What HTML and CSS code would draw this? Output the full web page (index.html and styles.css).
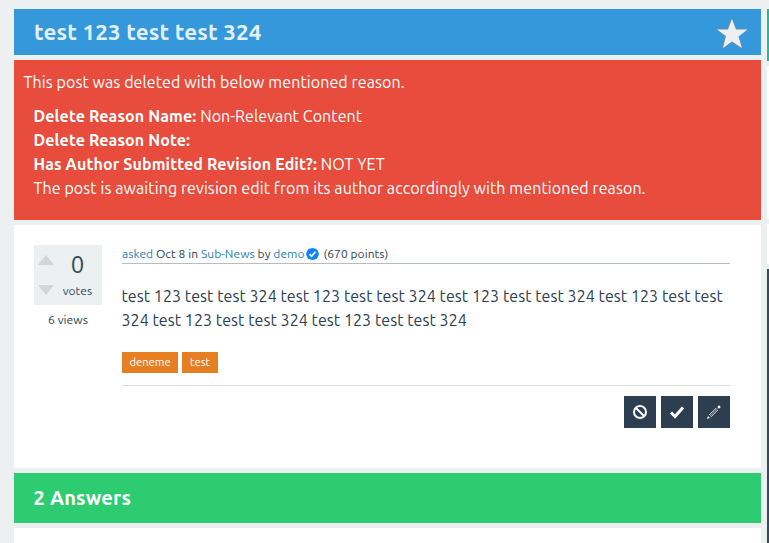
FILE: index.html
```html
<!DOCTYPE html>
<html lang="en">
<head>
<meta charset="utf-8">
<title>test 123 test test 324</title>
<link rel="stylesheet" href="styles.css">
</head>
<body>
<div class="page">
  <main class="main">
    <header class="title-bar">
      <h1>test 123 test test 324</h1>
      <svg class="star" width="32" height="32" viewBox="0 0 32 32"><path class="star-shadow" d="M15 .5l-4 10.500H0l9 7.500-3.500 12 10-6.500 9.500 6.500-3-12 9-7.500H19.500z"/><path class="star-face" d="M16 1l4 10.500h11.500l-9 7 3.500 11.500-10-6.500-9 6.500 3-12-9-6.500h11z"/></svg>
    </header>
    <section class="notice">
      <p class="notice-lead">This post was deleted with below mentioned reason.</p>
      <div class="notice-body">
        <div><b>Delete Reason Name:</b> <span>Non-Relevant Content</span></div>
        <div><b>Delete Reason Note:</b></div>
        <div><b>Has Author Submitted Revision Edit?:</b> <span>NOT YET</span></div>
        <div>The post is awaiting revision edit from its author accordingly with mentioned reason.</div>
      </div>
    </section>
    <section class="question">
      <aside class="stats">
        <div class="voting">
          <svg class="arrows" width="16" height="40" viewBox="0 0 16 40"><path d="M8 0l8 10H0zM0 30h16l-8 10z"/></svg>
          <div class="count"><span class="number">0</span><span class="votes">votes</span></div>
        </div>
        <div class="views">6 views</div>
      </aside>
      <div class="content">
        <div class="meta"><a>asked</a> Oct 8 in <a>Sub-News</a> by <a>demo</a><svg class="badge" width="13" height="12" viewBox="0 0 13 12"><path class="seal" d="M6.500 0l2 .5 2 .5 1.200 1.800L13 6l-1.300 3.200-1.200 1.800-2 .5-2 .5-2-.5-2-.5-1.200-1.800L0 6l1.300-3.200L2.500 1l2-.5z"/><path class="tick" d="M3.500 6.200l2.100 2.100 3.900-4.500"/></svg><span class="points"> (670 points)</span></div>
        <p class="text">test 123 test test 324 test 123 test test 324 test 123 test test 324 test 123 test test<br>324 test 123 test test 324 test 123 test test 324</p>
        <div class="tags"><a class="tag tag-a">deneme</a><a class="tag tag-b">test</a></div>
        <div class="actions">
          <button><svg width="16" height="16" viewBox="0 0 16 16"><circle class="ring" cx="8" cy="8" r="6"/><path class="ring" d="M4 4l8 8"/></svg></button>
          <button><svg width="16" height="16" viewBox="0 0 16 16"><path class="check" d="M2 8.500l4 4 8-9"/></svg></button>
          <button><svg width="16" height="16" viewBox="0 0 16 16"><path class="pen-body" d="M4 12l7.500-7.500"/><path class="pen-edge" d="M3 11l7-7M5 13l7-7"/><path class="pen-cap" d="M11.300 3l1.700-1.800 1.800 1.800L13 4.700zM1 15l1-3 2 2z"/></svg></button>
        </div>
      </div>
    </section>
    <h2 class="answers">2 Answers</h2>
    <section class="next"></section>
  </main>
  <aside class="sidebar">
    <div class="side-teal"></div>
    <div class="side-white"></div>
    <div class="side-small"></div>
    <div class="side-dark"></div>
  </aside>
</div>
</body>
</html>
```
FILE: styles.css
```css
* { box-sizing: border-box; }
body { margin: 0; background: #ecf0f1; color: #2c3e50; font: 16px/24px Ubuntu, "Noto Sans", sans-serif; height: 543px; overflow: hidden; white-space: nowrap; }
h1, h2, p { margin: 0; }
a { color: #2980b9; }
.page { display: flex; gap: 6px; height: 543px; padding: 9px 0 0 14px; }
.main { display: flex; flex-direction: column; gap: 5px; width: 747px; flex: none; }
.title-bar { display: flex; justify-content: space-between; align-items: center; height: 46px; padding: 0 13px 0 20px; background: #3498db; color: #e1f0fa; }
h1 { font-size: 22.400px; line-height: 30px; letter-spacing: .15px; }
.star { margin-top: 3px; }
.star-shadow { fill: #7d8b93; }
.star-face { fill: #ecf0f1; }
.notice { height: 160px; padding: 10px 9.500px; background: #e74c3c; color: #fff; letter-spacing: .09px; }
.notice b { letter-spacing: .12px; }
.notice-body { padding: 10px 10px 0; }
.question { display: flex; gap: 20px; height: 243px; padding: 20px 31px 0 20px; background: #fff; }
.stats { width: 68px; font-size: 12px; }
.voting { display: flex; height: 60px; background: #ecf0f1; color: #34495e; }
.arrows { margin: 10px 0 0 4px; fill: #d2d6d7; }
.count { display: flex; flex-direction: column; align-items: center; width: 48px; padding: 6px 1px 0 0; }
.number { font-size: 24px; line-height: 28px; }
.votes { line-height: 24px; letter-spacing: .05px; }
.views { line-height: 30px; text-align: center; letter-spacing: .08px; }
.content { flex: 1; }
.meta { height: 19px; font-size: 12px; line-height: 18px; border-bottom: 1px solid #b5bdc1; letter-spacing: .06px; }
.badge { vertical-align: -2px; margin: 0 2px 0 1px; }
.seal { fill: #0a84ff; }
.tick { fill: none; stroke: #fff; stroke-width: 1.700; }
.text { padding-top: 20px; height: 88px; margin-left: -.5px; letter-spacing: .07px; }
.tags { display: flex; gap: 4px; height: 34px; border-bottom: 1px solid #ddd; }
.tag { height: 21px; background: #e67e22; color: #fff; font-size: 11.200px; line-height: 21px; text-align: center; }
.tag-a { width: 56px; }
.tag-b { width: 36px; }
.actions { display: flex; justify-content: flex-end; gap: 5px; padding-top: 10px; }
button { display: grid; place-items: center; width: 32px; height: 32px; padding: 0; border: 0; background: #2c3e50; }
.ring, .check { fill: none; stroke: #fff; stroke-width: 2; }
.check { stroke-width: 3; }
.pen-body { stroke: #7d8791; stroke-width: 1.500; }
.pen-edge { fill: none; stroke: #cbd1d5; stroke-width: .9; }
.pen-cap { fill: #fff; }
.answers { height: 50px; padding-left: 19.500px; background: #2ecc71; color: #fff; font-size: 20px; line-height: 50px; letter-spacing: .2px; }
.next { flex: 1; background: #fff; }
.sidebar { display: flex; flex-direction: column; gap: 5px; flex: 1; }
.side-teal { height: 52px; background: #1abc9c; }
.side-white { height: 153px; background: #fff; }
.side-small { height: 40px; background: #fff; }
.side-dark { flex: 1; background: #34495e; }
```
